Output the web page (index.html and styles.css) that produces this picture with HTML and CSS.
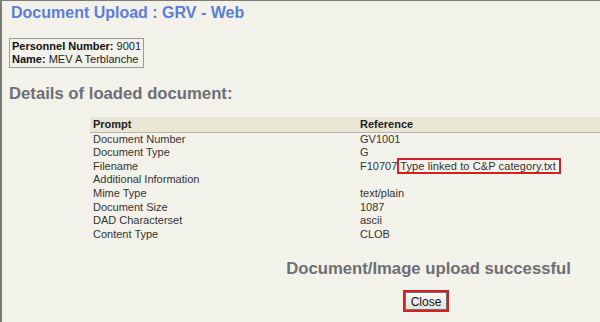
FILE: index.html
```html
<!DOCTYPE html>
<html>
<head>
<meta charset="utf-8">
<link rel="stylesheet" href="styles.css">
</head>
<body>
<div class="page">
  <h1 class="title">Document Upload : GRV - Web</h1>
  <div class="person">
    <div><b>Personnel Number:</b> 9001</div>
    <div><b>Name:</b> MEV A Terblanche</div>
  </div>
  <h2 class="subtitle">Details of loaded document:</h2>
  <div class="main">
    <table class="details">
      <thead>
        <tr><th class="c1">Prompt</th><th>Reference</th></tr>
      </thead>
      <tbody>
        <tr><td>Document Number</td><td>GV1001</td></tr>
        <tr><td>Document Type</td><td>G</td></tr>
        <tr><td>Filename</td><td>F10707<span class="mark">Type linked to C&amp;P category.txt</span></td></tr>
        <tr><td>Additional Information</td><td></td></tr>
        <tr><td>Mime Type</td><td>text/plain</td></tr>
        <tr><td>Document Size</td><td>1087</td></tr>
        <tr><td>DAD Characterset</td><td>ascii</td></tr>
        <tr><td>Content Type</td><td>CLOB</td></tr>
      </tbody>
    </table>
    <div class="success">Document/Image upload successful</div>
    <div class="actions"><span class="btnmark"><button class="btn">Close</button></span></div>
  </div>
</div>
</body>
</html>
```
FILE: styles.css
```css
html, body {
  margin: 0;
  padding: 0;
  overflow: hidden;
}
body {
  background: #f3f2ea;
  font-family: "Liberation Sans", Arial, sans-serif;
  font-size: 11px;
  color: #333;
  width: 600px;
  height: 322px;
  box-sizing: border-box;
  border-top: 1px solid #7c7c74;
  border-left: 2px solid #7c7c74;
}
.page {
  padding: 0 0 0 7px;
}
.title {
  margin: 0;
  padding-top: 2px;
  padding-left: 2px;
  font-size: 16px;
  font-weight: bold;
  color: #5a7ed8;
  line-height: 20px;
}
.person {
  margin-top: 15px;
  display: inline-block;
  border: 1px solid #9c9c96;
  padding: 1px 2px 1px 2px;
  line-height: 13px;
  color: #222;
}
.person b { color: #111; }
.subtitle {
  margin: 16px 0 0 0;
  font-size: 16.7px;
  font-weight: bold;
  color: #6e6e76;
  line-height: 20px;
}
.main {
  margin-left: 81px;
  width: 676px;
  margin-top: 13px;
}
.details {
  border-collapse: collapse;
  width: 676px;
  line-height: 13.6px;
}
.details th {
  text-align: left;
  font-weight: bold;
  color: #222;
  background: #e9e6d6;
  border-bottom: 1px solid #b8b6aa;
  padding: 1px 3px 0 3px;
}
.details th.c1 { width: 261px; }
.details td {
  padding: 0 3px;
  vertical-align: top;
  height: 13.6px;
}
.mark {
  border: 2px solid #d42020;
  padding: 0 3px 0 1px;
  letter-spacing: 0.1px;
}
.success {
  margin-top: 19px;
  text-align: center;
  font-size: 16.7px;
  font-weight: bold;
  color: #6e6e76;
  line-height: 18px;
  padding-left: 1px;
}
.actions {
  margin-top: 12px;
  text-align: center;
  padding-right: 4px;
}
.btnmark {
  display: inline-block;
  border: 2px solid #d42020;
  line-height: 0;
}
.btn {
  font-family: "Liberation Sans", Arial, sans-serif;
  font-size: 12px;
  color: #111;
  background: linear-gradient(#fafafa, #e2e2de);
  border: 1px solid #707070;
  padding: 2px 5px 2px 5px;
  margin: 0;
  line-height: 14px;
  height: 18px;
}
```
